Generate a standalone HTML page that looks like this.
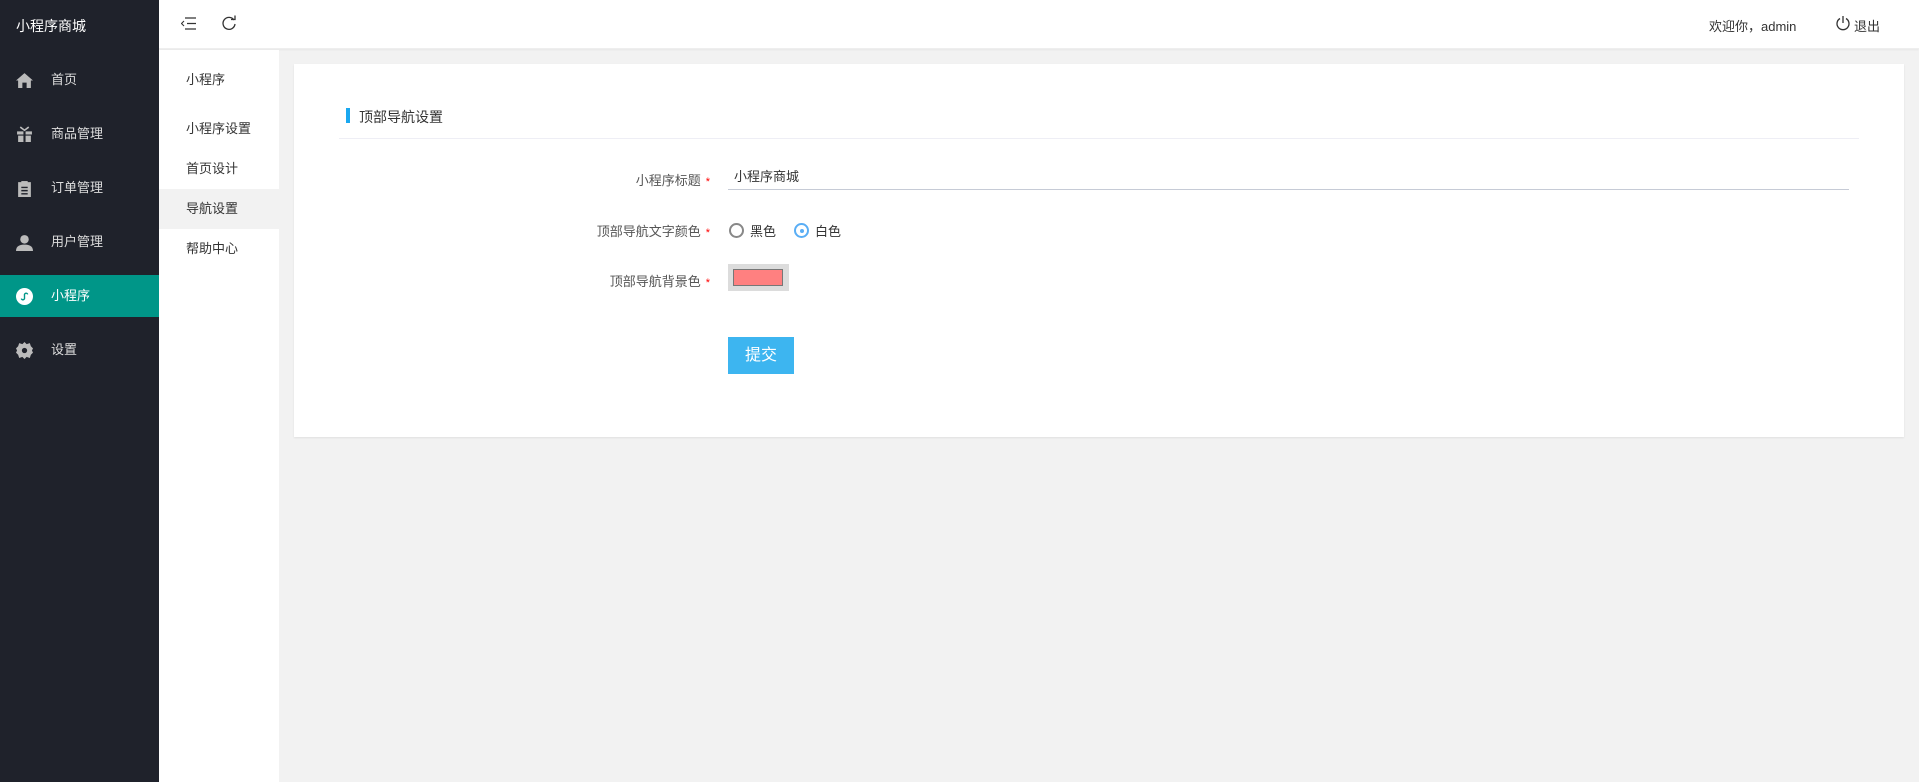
<!DOCTYPE html>
<html><head><meta charset="utf-8"><style>
*{margin:0;padding:0;box-sizing:border-box}
body{width:1919px;height:782px;overflow:hidden;background:#f2f2f2;font-family:"Liberation Sans","Noto Sans CJK SC",sans-serif;font-size:13px;color:#333;position:relative}
.side{position:absolute;left:0;top:0;width:159px;height:782px;background:#1f222b}
.logo{position:absolute;left:16px;top:16px;color:#fff;font-size:14px}
.mi{position:absolute;left:0;width:159px;height:42px;line-height:42px;color:#ddd;font-size:13px}
.mi .ic{position:absolute;left:16px;top:13px;width:17px;height:17px}
.mi span{position:absolute;left:51px}
.mi.act{background:#009688;color:#fff}
.top{position:absolute;left:159px;top:0;right:0;height:49px;background:#fff;border-bottom:1px solid #eee;box-shadow:0 1px 2px rgba(0,0,0,.05)}
.sub{position:absolute;left:159px;top:50px;width:120px;height:732px;background:#fff}
.si{position:absolute;left:0;width:120px;height:40px;line-height:40px;padding-left:27px;color:#333}
.card{position:absolute;left:294px;top:64px;width:1610px;height:373px;background:#fff;box-shadow:0 1px 2px rgba(0,0,0,.08)}
.lbl{position:absolute;right:1194px;color:#555;text-align:right;white-space:nowrap}
.lbl i{color:#f00;font-style:normal;margin-left:5px;font-size:11px}
</style></head><body>
<div class="side">
<div class="logo">小程序商城</div>
<div class="mi" style="top:59px"><svg class="ic" viewBox="0 0 16 16"><path d="M8 1L0 8h2v7h4v-5h4v5h4V8h2z" fill="#bbb"/></svg><span>首页</span></div>
<div class="mi" style="top:113px"><svg class="ic" viewBox="0 0 16 16"><path d="M1 5h14v3H1zM2 9h12v6H2z" fill="#bbb"/><path d="M7 4h2v11H7z" fill="#1f222b"/><path d="M4 1l4 3 4-3" stroke="#bbb" fill="none" stroke-width="1.5"/></svg><span>商品管理</span></div>
<div class="mi" style="top:167px"><svg class="ic" viewBox="0 0 16 16"><path d="M2 2h12v14H2z" fill="#bbb"/><path d="M5 1h6v3H5z" fill="#bbb"/><path d="M5 7h6M5 10h6M5 13h6" stroke="#1f222b" stroke-width="1.3"/></svg><span>订单管理</span></div>
<div class="mi" style="top:221px"><svg class="ic" viewBox="0 0 16 16"><circle cx="8" cy="5" r="4" fill="#bbb"/><path d="M0 16c0-5 4-6 8-6s8 1 8 6z" fill="#bbb"/></svg><span>用户管理</span></div>
<div class="mi act" style="top:275px"><svg class="ic" viewBox="0 0 16 16"><circle cx="8" cy="8" r="8" fill="#fff"/><path d="M5 10a1.5 1.5 0 1 0 3-1V7a1.5 1.5 0 1 1 3 -1" stroke="#009688" fill="none" stroke-width="1.3"/></svg><span>小程序</span></div>
<div class="mi" style="top:329px"><svg class="ic" viewBox="0 0 16 16"><path d="M8 0l2 2 3-1 1 3 2 2-1 2 1 2-2 2-1 3-3-1-2 2-2-2-3 1-1-3-2-2 1-2-1-2 2-2 1-3 3 1z" fill="#bbb"/><circle cx="8" cy="8" r="2.5" fill="#1f222b"/></svg><span>设置</span></div>
</div>
<div class="top">
<svg style="position:absolute;left:22px;top:17px" width="15" height="13" viewBox="0 0 15 13"><path d="M4 1h11M6 6.5h9M4 12h11" stroke="#333" stroke-width="1.2"/><path d="M3 4L0.5 6.5 3 9" stroke="#333" fill="none" stroke-width="1.1"/></svg>
<svg style="position:absolute;left:62px;top:15px" width="16" height="16" viewBox="0 0 16 16"><path d="M13 5A6 6 0 1 0 14 9" stroke="#333" fill="none" stroke-width="1.3"/><path d="M10 4.5h4v-4" stroke="#333" fill="none" stroke-width="1.3"/></svg>
<div style="position:absolute;left:1550px;top:16px;color:#333">欢迎你，admin</div>
<svg style="position:absolute;left:1676px;top:15px" width="16" height="16" viewBox="0 0 16 16"><path d="M5 3.5A6 6 0 1 0 11 3.5" stroke="#333" fill="none" stroke-width="1.3"/><path d="M8 1v7" stroke="#333" stroke-width="1.3"/></svg>
<div style="position:absolute;left:1695px;top:16px;color:#333">退出</div>
</div>
<div class="sub">
<div class="si" style="top:10px">小程序</div>
<div class="si" style="top:59px">小程序设置</div>
<div class="si" style="top:99px">首页设计</div>
<div class="si" style="top:139px;background:#f2f2f2">导航设置</div>
<div class="si" style="top:179px">帮助中心</div>
</div>
<div class="card">
<div style="position:absolute;left:52px;top:44px;width:4px;height:15px;background:#1aa8f0"></div>
<div style="position:absolute;left:65px;top:43px;font-size:14px;color:#333">顶部导航设置</div>
<div style="position:absolute;left:45px;top:74px;width:1520px;height:1px;background:#eeeef5"></div>
<div class="lbl" style="top:106px">小程序标题<i>*</i></div>
<div style="position:absolute;left:440px;top:102px;color:#333">小程序商城</div>
<div style="position:absolute;left:434px;top:125px;width:1121px;height:1px;background:#c6cbd6"></div>
<div class="lbl" style="top:157px">顶部导航文字颜色<i>*</i></div>
<div style="position:absolute;left:435px;top:159px;width:15px;height:15px;border:2px solid #888;border-radius:50%"></div>
<div style="position:absolute;left:456px;top:157px">黑色</div>
<div style="position:absolute;left:500px;top:159px;width:15px;height:15px;border:2px solid #5aaef5;border-radius:50%"><div style="position:absolute;left:3.5px;top:3.5px;width:4px;height:4px;background:#5aaef5;border-radius:50%"></div></div>
<div style="position:absolute;left:521px;top:157px">白色</div>
<div class="lbl" style="top:207px">顶部导航背景色<i>*</i></div>
<div style="position:absolute;left:434px;top:200px;width:61px;height:27px;background:#dcdcdc"><div style="position:absolute;left:5px;top:5px;width:50px;height:17px;background:#ff8080;border:1px solid #777"></div></div>
<div style="position:absolute;left:434px;top:273px;width:66px;height:37px;background:#3db5f0;color:#fff;font-size:16px;line-height:37px;text-align:center">提交</div>
</div>
</body></html>
